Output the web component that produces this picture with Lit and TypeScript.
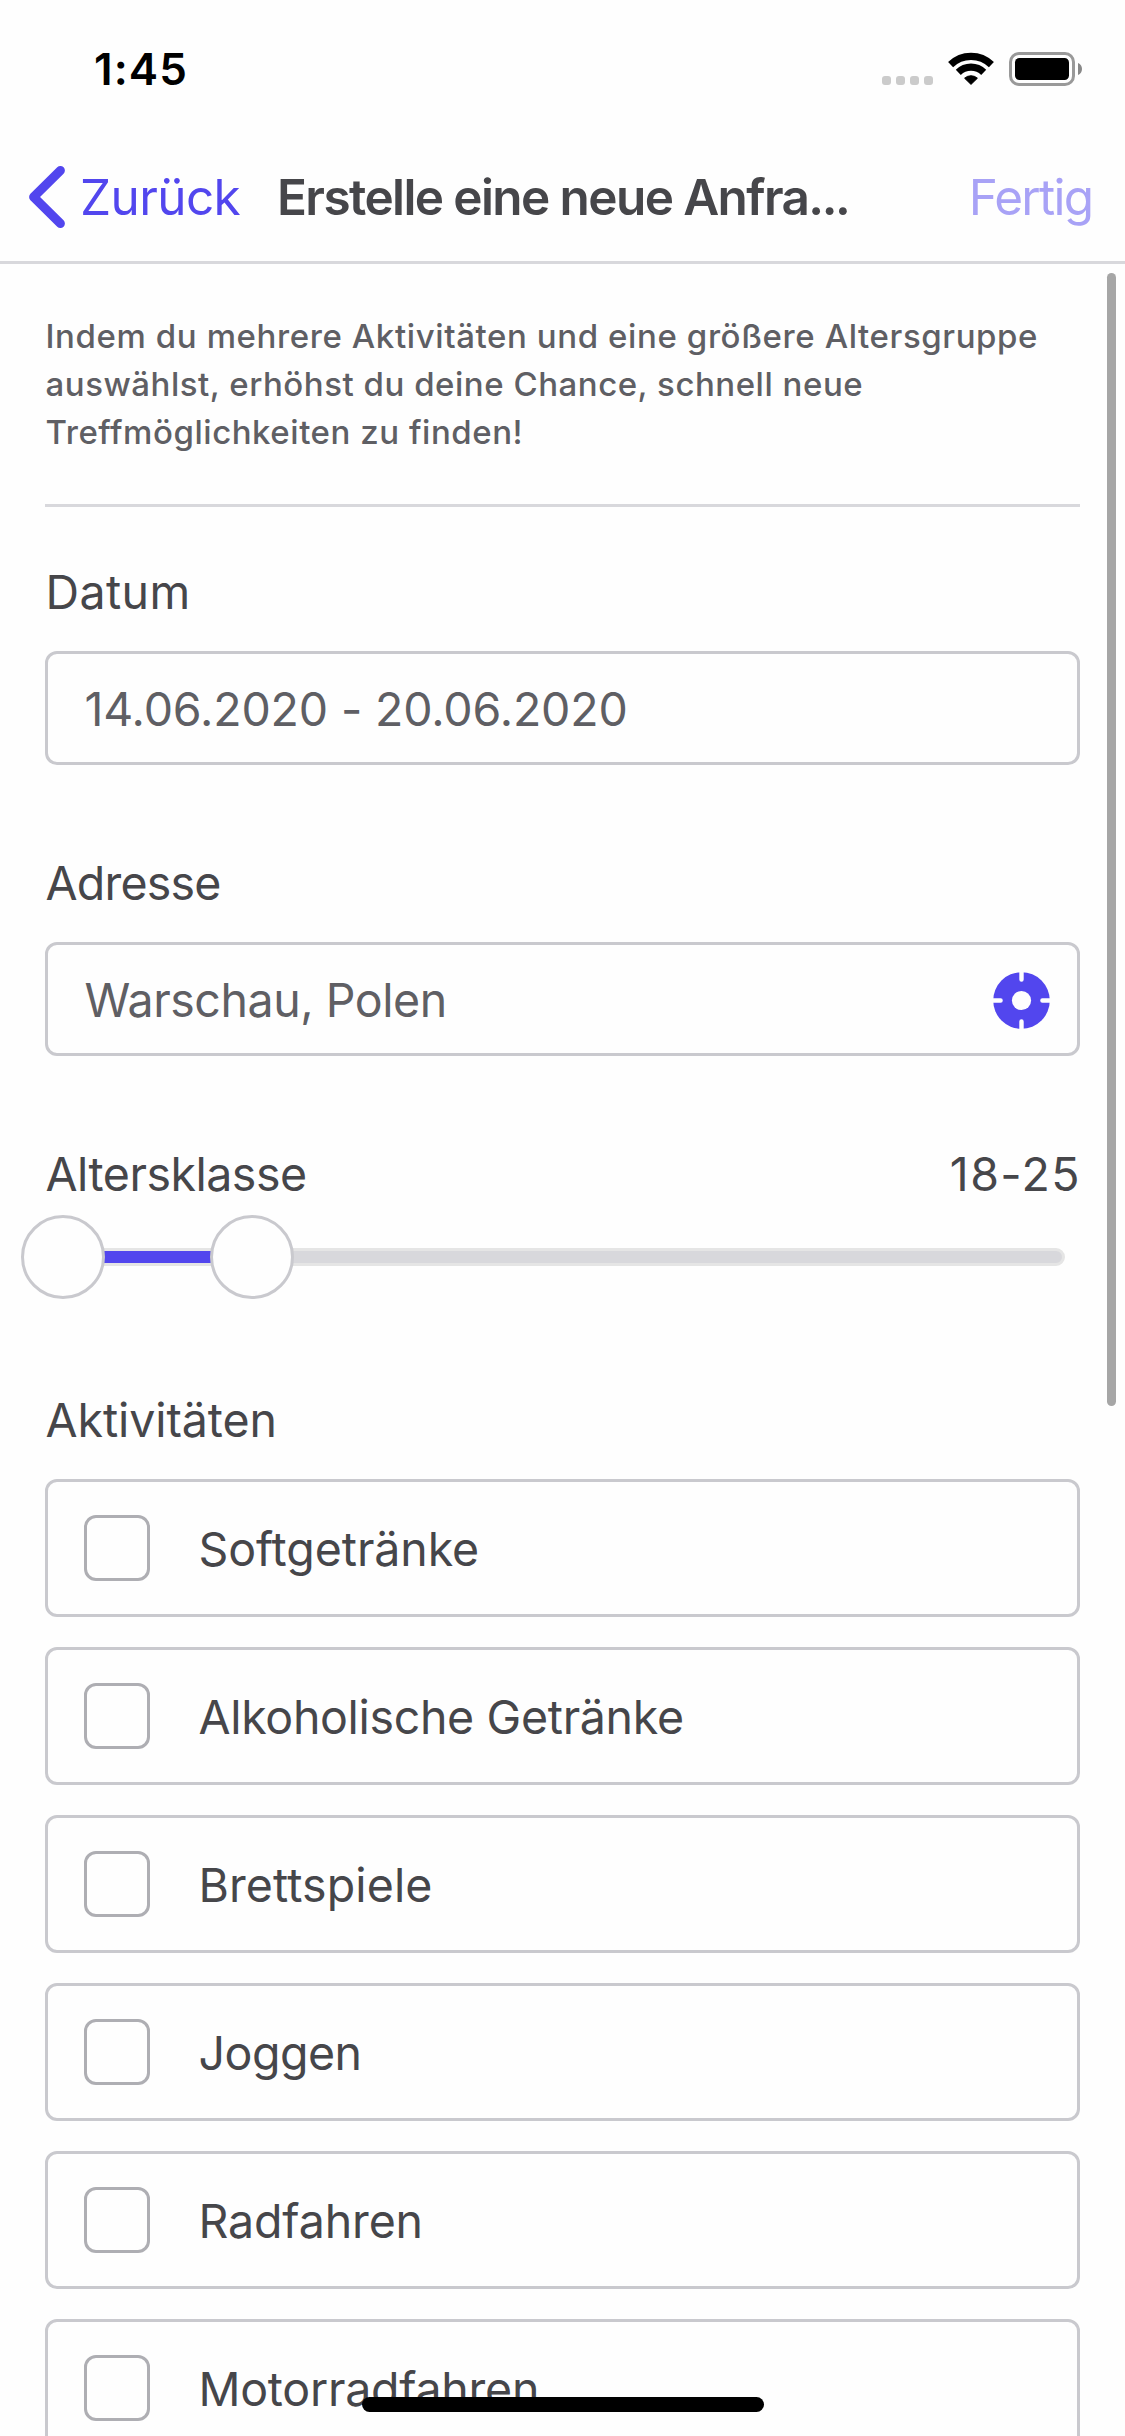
import { LitElement, html, css } from "lit";
import { customElement, property } from "lit/decorators.js";

interface Line {
  text: string;
  /** letter spacing in px */
  track: number;
}

const INTRO: Line[] = [
  { text: "Indem du mehrere Aktivitäten und eine größere Altersgruppe", track: 0.6 },
  { text: "auswählst, erhöhst du deine Chance, schnell neue", track: 0.52 },
  { text: "Treffmöglichkeiten zu finden!", track: 0.54 },
];

const ACTIVITIES: Line[] = [
  { text: "Softgetränke", track: -0.08 },
  { text: "Alkoholische Getränke", track: -0.33 },
  { text: "Brettspiele", track: 0.1 },
  { text: "Joggen", track: -0.5 },
  { text: "Radfahren", track: -0.14 },
  { text: "Motorradfahren", track: -0.26 },
];

@customElement("status-bar")
export class StatusBar extends LitElement {
  static styles = css`
    :host {
      display: flex;
      justify-content: space-between;
      height: 132px;
      padding: 39px 43px 0 94px;
      box-sizing: border-box;
      color: #000;
    }
    .time {
      font-size: 44px;
      font-weight: 600;
      line-height: 60px;
      letter-spacing: 1.1px;
    }
    .icons {
      display: flex;
      height: 34px;
      margin-top: 13px;
    }
    .dots {
      display: flex;
      gap: 5px;
      align-items: flex-end;
      height: 33px;
      margin-right: 15px;
    }
    .dot {
      width: 9px;
      height: 9px;
      border-radius: 3px;
      background: #cbcbcb;
    }
    .wifi {
      margin-right: 15px;
    }
    svg {
      display: block;
    }
  `;

  render() {
    return html`
      <div class="time">1:45</div>
      <div class="icons">
        <div class="dots">
          <span class="dot"></span><span class="dot"></span><span class="dot"></span><span class="dot"></span>
        </div>
        <svg class="wifi" width="46" height="34" viewBox="0 0 46 34">
          <path d="M2.6 12.6A29.3 29.3 0 0 1 43.4 12.6" fill="none" stroke="#000" stroke-width="7.2" />
          <path d="M10.3 20.3A18.2 18.2 0 0 1 35.7 20.3" fill="none" stroke="#000" stroke-width="7.2" />
          <path d="M23 32.4L16.6 26.2A9.6 9.6 0 0 1 29.4 26.2Z" stroke="#000" stroke-linejoin="round" />
        </svg>
        <svg width="73" height="34" viewBox="0 0 73 34">
          <rect x="1.5" y="1.5" width="63" height="31" rx="8.5" fill="none" stroke="#999" stroke-width="3" />
          <rect x="6" y="6" width="54" height="22" rx="4.5" />
          <path d="M69 11C71.8 12.2 73 14.4 73 17S71.8 21.8 69 23Z" fill="#888" />
        </svg>
      </div>
    `;
  }
}

@customElement("nav-bar")
export class NavBar extends LitElement {
  static styles = css`
    :host {
      display: grid;
      grid-template-columns: 248px 1fr auto;
      height: 132px;
      padding: 34px 32.5px 0 29px;
      box-sizing: border-box;
      border-bottom: 3px solid #d8d8dc;
      font-size: 49.5px;
      line-height: 62px;
      white-space: nowrap;
    }
    .back {
      display: flex;
      gap: 15px;
      color: #5246ee;
      letter-spacing: -0.6px;
    }
    .title {
      font-weight: 600;
      color: #46464a;
      letter-spacing: -1.6px;
    }
    .ellipsis {
      letter-spacing: -2.4px;
    }
    .done {
      color: #a8a2f6;
      letter-spacing: -1.7px;
    }
    svg {
      display: block;
    }
  `;

  render() {
    return html`
      <div class="back">
        <svg width="36" height="62" viewBox="0 0 36 62">
          <path
            d="M31.4 4.5L4.6 31L31.4 57.5"
            fill="none"
            stroke="#5246ee"
            stroke-width="9"
            stroke-linecap="round"
            stroke-linejoin="round"
          />
        </svg>
        <span>Zurück</span>
      </div>
      <div class="title">Erstelle eine neue Anfra<span class="ellipsis">...</span></div>
      <div class="done">Fertig</div>
    `;
  }
}

@customElement("age-slider")
export class AgeSlider extends LitElement {
  @property({ type: Number }) span = 105;

  static styles = css`
    :host {
      display: flex;
      align-items: center;
      position: relative;
      height: 84px;
      margin: 11px 15px 0 18px;
    }
    .track {
      flex: 1;
      height: 18px;
      box-sizing: border-box;
      border: 3px solid #e5e5e5;
      border-radius: 9px;
      background: #d8d8dc;
    }
    .range {
      position: absolute;
      left: 0;
      top: 36px;
      height: 12px;
      background: #5246ee;
    }
    .knob {
      position: absolute;
      top: 0;
      width: 84px;
      height: 84px;
      margin-left: -42px;
      box-sizing: border-box;
      border: 3px solid #c9c9ce;
      border-radius: 50%;
      background: #fefefe;
    }
  `;

  render() {
    return html`
      <div class="track"></div>
      <div class="range" style="width:${this.span}px"></div>
      <div class="knob" style="left:0"></div>
      <div class="knob" style="left:${this.span}px"></div>
    `;
  }
}

@customElement("activity-card")
export class ActivityCard extends LitElement {
  @property() label = "";
  @property({ type: Number }) track = 0;

  static styles = css`
    :host {
      display: flex;
      align-items: center;
      gap: 48.5px;
      height: 138px;
      padding: 0 36px;
      box-sizing: border-box;
      border: 3px solid #c9c9ce;
      border-radius: 12px;
    }
    .box {
      width: 66px;
      height: 66px;
      box-sizing: border-box;
      border: 3px solid #aeaeb3;
      border-radius: 12px;
    }
    .label {
      padding-top: 2px;
      line-height: 60px;
      white-space: nowrap;
    }
  `;

  render() {
    return html`
      <span class="box"></span>
      <span class="label" style="letter-spacing:${this.track}px">${this.label}</span>
    `;
  }
}

@customElement("app-root")
export class AppRoot extends LitElement {
  static styles = css`
    :host {
      display: block;
      position: relative;
      height: 2436px;
      overflow: hidden;
      background: #fefefe;
      color: #46464a;
      font-family: Inter, "Liberation Sans", sans-serif;
      font-size: 46.5px;
      line-height: 60px;
    }
    .form {
      padding: 48px 45px 0;
    }
    .intro {
      padding: 0 0 48px 0.5px;
      border-bottom: 3px solid #d8d8dc;
      font-size: 33px;
      font-weight: 500;
      line-height: 48px;
      color: #5f5f64;
      white-space: nowrap;
    }
    .intro-line {
      display: block;
    }
    .row {
      display: flex;
      justify-content: space-between;
      margin-top: 88px;
      padding-left: 0.5px;
    }
    .row.first {
      margin-top: 55px;
    }
    .row.activities {
      margin-top: 91px;
    }
    .datum {
      letter-spacing: 0.4px;
    }
    .adresse {
      letter-spacing: -0.8px;
    }
    .alter {
      letter-spacing: -0.5px;
    }
    .ages {
      margin-right: -1px;
      letter-spacing: 1.4px;
    }
    .aktiv {
      letter-spacing: -0.09px;
    }
    .input {
      display: flex;
      align-items: center;
      justify-content: space-between;
      height: 114px;
      margin-top: 29px;
      padding: 0 26.5px 0 36.5px;
      box-sizing: border-box;
      border: 3px solid #c9c9ce;
      border-radius: 12px;
      color: #5f5f64;
    }
    .date,
    .place {
      padding-top: 2px;
      letter-spacing: -0.15px;
    }
    .place {
      letter-spacing: -0.45px;
    }
    .target {
      display: block;
      margin: 3px 1px 0 0;
    }
    .list {
      display: flex;
      flex-direction: column;
      gap: 30px;
      margin-top: 29px;
    }
    .scrollbar {
      position: absolute;
      right: 9px;
      top: 273px;
      width: 9px;
      height: 1133px;
      border-radius: 5px;
      background: #a6a6a6;
    }
    .home {
      position: absolute;
      left: 362px;
      bottom: 24px;
      width: 402px;
      height: 15px;
      border-radius: 8px;
      background: #000;
    }
  `;

  render() {
    return html`
      <status-bar></status-bar>
      <nav-bar></nav-bar>
      <div class="form">
        <div class="intro">
          ${INTRO.map((l) => html`<span class="intro-line" style="letter-spacing:${l.track}px">${l.text}</span>`)}
        </div>

        <div class="row first"><span class="datum">Datum</span></div>
        <div class="input"><span class="date">14.06.2020 - 20.06.2020</span></div>

        <div class="row"><span class="adresse">Adresse</span></div>
        <div class="input">
          <span class="place">Warschau, Polen</span>
          <svg class="target" width="57" height="57" viewBox="0 0 57 57">
            <circle cx="28.5" cy="28.5" r="28.3" fill="#5246ee" />
            <circle cx="28.5" cy="28.5" r="9.6" fill="#fefefe" />
            <path
              d="M28.5 -3V7.6M28.5 60V49.4M-3 28.5H7.6M60 28.5H49.4"
              stroke="#fefefe"
              stroke-width="4.4"
              stroke-linecap="round"
            />
          </svg>
        </div>

        <div class="row">
          <span class="alter">Altersklasse</span>
          <span class="ages">18-25</span>
        </div>
        <age-slider .span=${189}></age-slider>

        <div class="row activities"><span class="aktiv">Aktivitäten</span></div>
        <div class="list">
          ${ACTIVITIES.map((a) => html`<activity-card .label=${a.text} .track=${a.track}></activity-card>`)}
        </div>
      </div>
      <div class="scrollbar"></div>
      <div class="home"></div>
    `;
  }
}
